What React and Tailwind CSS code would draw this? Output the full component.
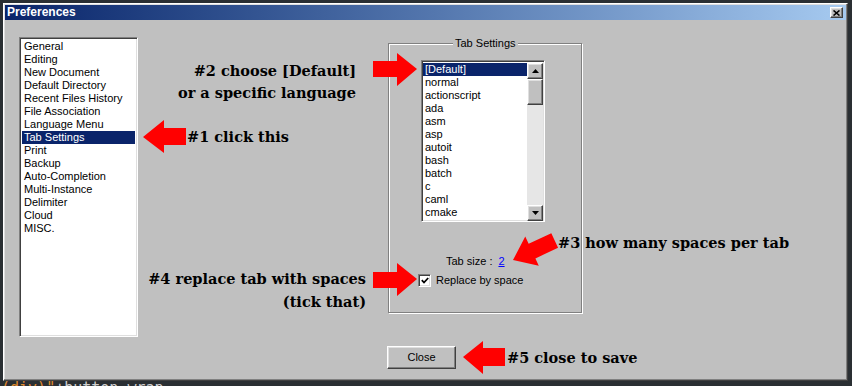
import React from 'react';

const raised =
  'border border-t-white border-l-white border-r-[#404040] border-b-[#404040] shadow-[inset_-1px_-1px_0_#808080,inset_1px_1px_0_#dfdfdf]';
const sunken =
  'border border-t-[#808080] border-l-[#808080] border-r-white border-b-white shadow-[inset_1px_1px_0_#404040,inset_-1px_-1px_0_#dfdfdf]';

const categories = [
  'General',
  'Editing',
  'New Document',
  'Default Directory',
  'Recent Files History',
  'File Association',
  'Language Menu',
  'Tab Settings',
  'Print',
  'Backup',
  'Auto-Completion',
  'Multi-Instance',
  'Delimiter',
  'Cloud',
  'MISC.',
];

const languages = [
  '[Default]',
  'normal',
  'actionscript',
  'ada',
  'asm',
  'asp',
  'autoit',
  'bash',
  'batch',
  'c',
  'caml',
  'cmake',
  'cobol',
];

function ListRow({ label, selected }) {
  return (
    <div
      className={`h-[13px] leading-[13px] pl-[2px] whitespace-nowrap ${
        selected ? 'bg-[#0a246a] text-white' : 'text-black'
      }`}
    >
      {label}
    </div>
  );
}

function ScrollButton({ dir }) {
  return (
    <div className={`w-[16px] h-[16px] bg-[#c0c0c0] flex items-center justify-center ${raised}`}>
      <svg width="7" height="4" viewBox="0 0 7 4">
        {dir === 'up' ? (
          <polygon points="3.5,0 7,4 0,4" fill="#000" />
        ) : (
          <polygon points="0,0 7,0 3.5,4" fill="#000" />
        )}
      </svg>
    </div>
  );
}

function Annotations() {
  return (
    <div
      className="absolute inset-0 pointer-events-none text-black font-bold text-[14.5px]"
      style={{ fontFamily: '"DejaVu Serif", serif' }}
    >
      <svg className="absolute inset-0" width="852" height="386">
        <g fill="#ff0000">
          {/* #1 */}
          <polygon points="143,137 164,120 164,128 186,128 186,145 164,145 164,153" />
          {/* #2 */}
          <polygon points="373,61 397,61 397,53 417,69 397,86 397,77 373,77" />
          {/* #3 */}
          <polygon
            points="0,0 21,-16 21,-8 46,-8 46,8 21,8 21,16"
            transform="translate(513 260) rotate(-25)"
          />
          {/* #4 */}
          <polygon points="373,272 397,272 397,263 417,279 397,296 397,288 373,288" />
          {/* #5 */}
          <polygon points="463,357 483,341 483,348 505,348 505,366 483,366 483,374" />
        </g>
      </svg>

      <div className="absolute left-[120px] top-[60px] w-[236px] text-right leading-[22px]">
        <div>#2 choose [Default]</div>
        <div>or a specific language</div>
      </div>
      <div className="absolute left-[187px] top-[126px] leading-[22px] whitespace-nowrap">#1 click this</div>
      <div className="absolute left-[558px] top-[232px] leading-[22px] whitespace-nowrap">
        #3 how many spaces per tab
      </div>
      <div className="absolute left-[120px] top-[267px] w-[246px] text-right leading-[23px]">
        <div>#4 replace tab with spaces</div>
        <div>(tick that)</div>
      </div>
      <div className="absolute left-[507px] top-[347px] leading-[22px] whitespace-nowrap">#5 close to save</div>
    </div>
  );
}

export default function App() {
  return (
    <div className="relative w-[852px] h-[386px] overflow-hidden bg-[#2a2f33] flex flex-col pt-[3px] pl-[3px]">
      {/* Dialog */}
      <div
        className={`w-[845px] h-[378px] shrink-0 bg-[#c0c0c0] flex flex-col text-[11px] ${raised}`}
        style={{ fontFamily: '"Liberation Sans", Arial, sans-serif' }}
      >
        {/* Title bar */}
        <div className="mx-[1px] mt-[1px] h-[15px] shrink-0 bg-gradient-to-r from-[#0a246a] to-[#a6caf0] flex items-center justify-between pl-[2px] pr-[3px]">
          <span className="text-white font-bold text-[12px] leading-[15px]">Preferences</span>
          <div className={`w-[13px] h-[11px] bg-[#c0c0c0] flex items-center justify-center ${raised}`}>
            <svg width="7" height="6" viewBox="0 0 7 6">
              <path d="M0.5 0.5 L6.5 5.5 M6.5 0.5 L0.5 5.5" stroke="#000" strokeWidth="1.6" />
            </svg>
          </div>
        </div>

        {/* Body */}
        <div className="flex items-start pl-[15px]">
          {/* Category list */}
          <div className={`mt-[17px] w-[119px] h-[300px] bg-white p-[2px] ${sunken}`}>
            {categories.map((c) => (
              <ListRow key={c} label={c} selected={c === 'Tab Settings'} />
            ))}
          </div>

          {/* Right column */}
          <div className="ml-[250px] mt-[23px] flex flex-col">
            {/* Group box */}
            <div className="relative w-[194px] h-[270px] border border-[#808080] shadow-[inset_1px_1px_0_#fff,1px_1px_0_#fff] flex flex-col items-start pl-[32px] pt-[16px]">
              <span className="absolute left-[64px] top-[-7px] px-[2px] bg-[#c0c0c0] leading-[13px] text-black">
                Tab Settings
              </span>

              {/* Language list */}
              <div className={`w-[124px] h-[162px] bg-white p-[1px] flex ${sunken}`}>
                <div className="w-[104px] h-full overflow-hidden pt-[1px]">
                  {languages.map((l) => (
                    <ListRow key={l} label={l} selected={l === '[Default]'} />
                  ))}
                </div>
                <div className="w-[16px] h-full bg-[#e6e6e6] flex flex-col mt-[1px]">
                  <ScrollButton dir="up" />
                  <div className={`w-[16px] h-[26px] bg-[#c0c0c0] ${raised}`} />
                  <div className="flex-1" />
                  <ScrollButton dir="down" />
                </div>
              </div>

              {/* Tab size */}
              <div className="mt-[33px] ml-[25px] flex items-center leading-[13px] text-black">
                <span>Tab size :</span>
                <span className="ml-[6px] text-[#0000ff] underline">2</span>
              </div>

              {/* Replace by space */}
              <div className="mt-[6px] -ml-[3px] flex items-center leading-[13px] text-black">
                <div className={`w-[13px] h-[13px] bg-white flex items-center justify-center ${sunken}`}>
                  <svg width="8" height="7" viewBox="0 0 8 7">
                    <path d="M0.8 3.2 L3 5.5 L7.2 1" stroke="#000" strokeWidth="1.8" fill="none" />
                  </svg>
                </div>
                <span className="ml-[5px]">Replace by space</span>
              </div>
            </div>

            {/* Close button */}
            <button
              className={`mt-[33px] -ml-[1px] w-[69px] h-[23px] bg-[#c0c0c0] text-black text-[11px] ${raised}`}
            >
              Close
            </button>
          </div>
        </div>
      </div>

      {/* Editor text peeking below */}
      <div
        className="mt-[-1px] ml-[-3px] pl-[1px] text-[15px] leading-[16px] whitespace-nowrap"
        style={{ fontFamily: '"DejaVu Sans Mono", monospace' }}
      >
        <span className="text-[#e08a2e]">(div)"</span>
        <span className="text-[#d0d0d0]">+button wrap</span>
      </div>

      <Annotations />
    </div>
  );
}
